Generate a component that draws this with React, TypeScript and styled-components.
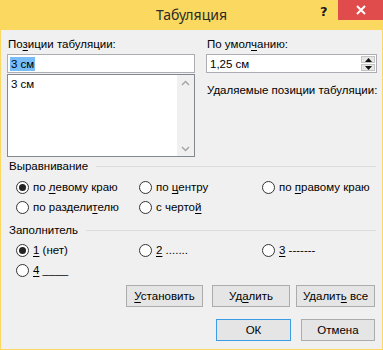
import React from 'react';
import styled, { createGlobalStyle } from 'styled-components';

const Global = createGlobalStyle`
  html, body {
    margin: 0;
    padding: 0;
    background: #ffffff;
  }
  * {
    box-sizing: border-box;
  }
`;

const Window = styled.div`
  width: 383px;
  height: 350px;
  background: #fbd960;
  display: flex;
  flex-direction: column;
  font-family: 'Liberation Sans', Arial, sans-serif;
  font-size: 11.5px;
  color: #000;
`;

const TitleBar = styled.div`
  height: 30px;
  position: relative;
`;

const Title = styled.div`
  position: absolute;
  left: 0;
  right: 0;
  top: 5px;
  text-align: center;
  font-family: 'Noto Sans', sans-serif;
  font-size: 14px;
  line-height: 20px;
  color: #2b2b2b;
`;

const HelpGlyph = styled.div`
  position: absolute;
  left: 320px;
  top: 3px;
  font-family: 'DejaVu Sans', sans-serif;
  font-weight: bold;
  font-size: 13px;
  line-height: 18px;
  color: #1a1a1a;
`;

const CloseButton = styled.div`
  position: absolute;
  right: 0;
  top: 0;
  width: 45px;
  height: 20px;
  background: #e04b4b;
  display: flex;
  align-items: center;
  justify-content: center;
`;

const Body = styled.div`
  flex: 1;
  margin: 0 1px 1px 1px;
  background: #f0f0f0;
  padding: 7px 5px 0 6px;
  display: flex;
  flex-direction: column;
`;

const TopGrid = styled.div`
  display: grid;
  grid-template-columns: 188px 171px;
  column-gap: 11px;
`;

const Column = styled.div`
  display: flex;
  flex-direction: column;
  min-width: 0;
`;

const Label = styled.div<{ $gap?: number }>`
  line-height: 15px;
  padding-left: 1px;
  margin-top: ${(p) => p.$gap || 0}px;
  margin-bottom: 2px;
  white-space: nowrap;
`;

const Key = styled.span`
  text-decoration: underline;
  text-underline-offset: 2px;
`;

const TextBox = styled.div`
  height: 19px;
  background: #fff;
  border: 1px solid #abadb3;
  display: flex;
  align-items: center;
  padding-left: 2px;
`;

const Selected = styled.span`
  background: #76bdf7;
  padding: 0 1px;
  line-height: 14px;
`;

const ListBox = styled.div`
  margin-top: 1px;
  height: 83px;
  background: #fff;
  border: 1px solid #828790;
  display: flex;
`;

const ListItems = styled.div`
  flex: 1;
  padding: 2px 3px;
  line-height: 15px;
`;

const ScrollBar = styled.div`
  width: 17px;
  background: #f0f0f0;
  display: flex;
  flex-direction: column;
  justify-content: space-between;
  align-items: center;
  padding: 5px 0 4px;
`;

const SpinBox = styled.div`
  height: 19px;
  background: #fff;
  border: 1px solid #abadb3;
  display: flex;
  align-items: stretch;
`;

const SpinText = styled.div`
  flex: 1;
  display: flex;
  align-items: center;
  padding-left: 3px;
`;

const SpinButtons = styled.div`
  width: 16px;
  display: flex;
  flex-direction: column;
  padding: 1px;
  gap: 1px;
`;

const SpinButton = styled.div`
  flex: 1;
  background: #e6e6e6;
  border: 1px solid #c4c4c4;
  display: flex;
  align-items: center;
  justify-content: center;
`;

const GroupTitle = styled.div<{ $top: number }>`
  display: flex;
  align-items: center;
  margin-top: ${(p) => p.$top}px;
  line-height: 15px;
  padding-left: 2px;
  padding-right: 1px;
  &::after {
    content: '';
    flex: 1;
    height: 1px;
    background: #dcdcdc;
    margin-left: 8px;
    margin-top: -1px;
  }
`;

const RadioGrid = styled.div<{ $top: number }>`
  display: grid;
  grid-template-columns: 123px 123px auto;
  grid-auto-rows: 20px;
  margin: ${(p) => p.$top}px 0 0 9px;
`;

const RadioItem = styled.div`
  display: flex;
  align-items: center;
  gap: 4px;
  white-space: nowrap;
`;

const RadioCircle = styled.span<{ $checked?: boolean }>`
  width: 13px;
  height: 13px;
  border-radius: 50%;
  border: 1px solid #333;
  background: #fff;
  display: flex;
  align-items: center;
  justify-content: center;
  flex: none;
  &::after {
    content: '';
    width: 7px;
    height: 7px;
    border-radius: 50%;
    background: ${(p) => (p.$checked ? '#222' : 'transparent')};
  }
`;

const ButtonRow = styled.div<{ $top: number }>`
  display: flex;
  justify-content: flex-end;
  margin-top: ${(p) => p.$top}px;
  padding-right: 2px;
`;

const Button = styled.div<{ $w: number; $gap?: number; $default?: boolean }>`
  width: ${(p) => p.$w}px;
  height: 22px;
  margin-left: ${(p) => p.$gap || 0}px;
  background: #e5e5e5;
  border: 1px solid ${(p) => (p.$default ? '#3c9de6' : '#acacac')};
  display: flex;
  align-items: center;
  justify-content: center;
  white-space: nowrap;
`;

const Radio = ({ checked, children }: { checked?: boolean; children: React.ReactNode }) => (
  <RadioItem>
    <RadioCircle $checked={checked} />
    <span>{children}</span>
  </RadioItem>
);

const Chevron = ({ up }: { up?: boolean }) => (
  <svg width="9" height="6" viewBox="0 0 9 6">
    <path d={up ? 'M1 5 L4.5 1.5 L8 5' : 'M1 1 L4.5 4.5 L8 1'} fill="none" stroke="#a3a3a3" strokeWidth="1.4" />
  </svg>
);

const Triangle = ({ up }: { up?: boolean }) => (
  <svg width="7" height="4" viewBox="0 0 7 4">
    <path d={up ? 'M0 4 L3.5 0 L7 4 Z' : 'M0 0 L3.5 4 L7 0 Z'} fill="#111" />
  </svg>
);

export default function App() {
  return (
    <>
      <Global />
      <Window>
        <TitleBar>
          <Title>Табуляция</Title>
          <HelpGlyph>?</HelpGlyph>
          <CloseButton>
            <svg width="10" height="10" viewBox="0 0 10 10">
              <path d="M1 1 L9 9 M9 1 L1 9" stroke="#fff" strokeWidth="2" />
            </svg>
          </CloseButton>
        </TitleBar>
        <Body>
          <TopGrid>
            <Column>
              <Label>
                По<Key>з</Key>иции табуляции:
              </Label>
              <TextBox>
                <Selected>3 см</Selected>
              </TextBox>
              <ListBox>
                <ListItems>3 см</ListItems>
                <ScrollBar>
                  <Chevron up />
                  <Chevron />
                </ScrollBar>
              </ListBox>
            </Column>
            <Column>
              <Label>
                По умол<Key>ч</Key>анию:
              </Label>
              <SpinBox>
                <SpinText>1,25 см</SpinText>
                <SpinButtons>
                  <SpinButton>
                    <Triangle up />
                  </SpinButton>
                  <SpinButton>
                    <Triangle />
                  </SpinButton>
                </SpinButtons>
              </SpinBox>
              <Label $gap={10}>Удаляемые позиции табуляции:</Label>
            </Column>
          </TopGrid>

          <GroupTitle $top={2}>Выравнивание</GroupTitle>
          <RadioGrid $top={3}>
            <Radio checked>
              по <Key>л</Key>евому краю
            </Radio>
            <Radio>
              по <Key>ц</Key>ентру
            </Radio>
            <Radio>
              по <Key>п</Key>равому краю
            </Radio>
            <Radio>
              по раздели<Key>т</Key>елю
            </Radio>
            <Radio>
              с черто<Key>й</Key>
            </Radio>
          </RadioGrid>

          <GroupTitle $top={6}>Заполнитель</GroupTitle>
          <RadioGrid $top={2}>
            <Radio checked>
              <Key>1</Key> (нет)
            </Radio>
            <Radio>
              <Key>2</Key> .......
            </Radio>
            <Radio>
              <Key>3</Key> -------
            </Radio>
            <Radio>
              <Key>4</Key> ____
            </Radio>
          </RadioGrid>

          <ButtonRow $top={5}>
            <Button $w={77}>
              <span>
                <Key>У</Key>становить
              </span>
            </Button>
            <Button $w={78} $gap={9}>
              <span>
                Уд<Key>а</Key>лить
              </span>
            </Button>
            <Button $w={79} $gap={6}>
              <span>
                Удалит<Key>ь</Key> все
              </span>
            </Button>
          </ButtonRow>
          <ButtonRow $top={12}>
            <Button $w={75} $default>
              ОК
            </Button>
            <Button $w={74} $gap={10}>
              Отмена
            </Button>
          </ButtonRow>
        </Body>
      </Window>
    </>
  );
}
